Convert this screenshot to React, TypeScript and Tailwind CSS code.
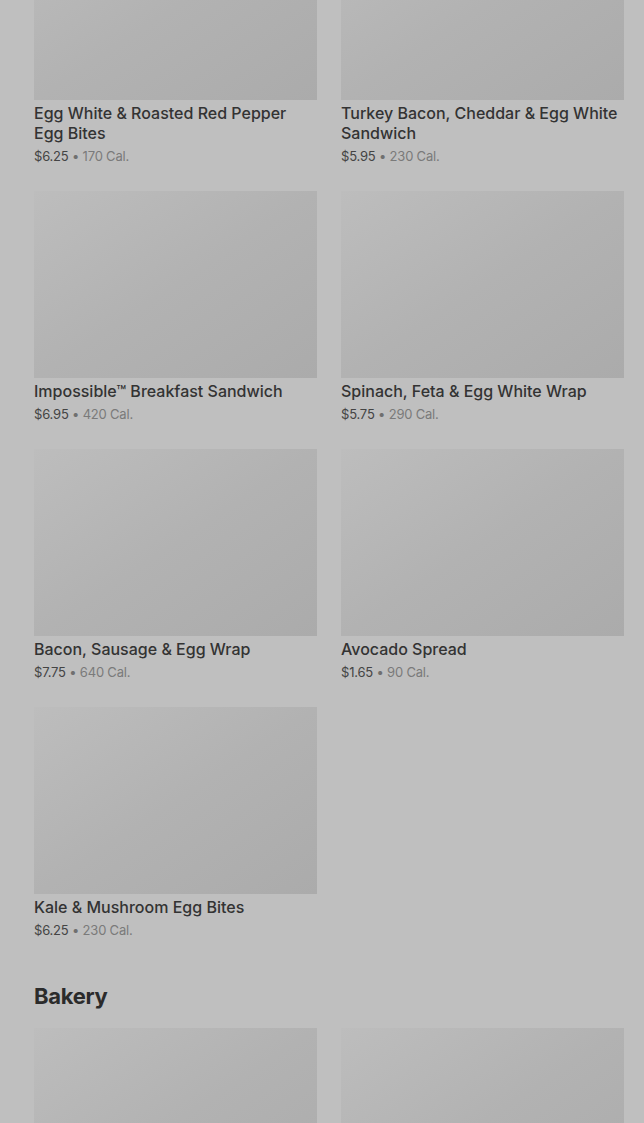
const breakfast = [
  { name: "Egg White & Roasted Red Pepper Egg Bites", price: "$6.25", cal: "170 Cal." },
  { name: "Turkey Bacon, Cheddar & Egg White Sandwich", price: "$5.95", cal: "230 Cal." },
  { name: "Impossible™ Breakfast Sandwich", price: "$6.95", cal: "420 Cal." },
  { name: "Spinach, Feta & Egg White Wrap", price: "$5.75", cal: "290 Cal." },
  { name: "Bacon, Sausage & Egg Wrap", price: "$7.75", cal: "640 Cal." },
  { name: "Avocado Spread", price: "$1.65", cal: "90 Cal." },
  { name: "Kale & Mushroom Egg Bites", price: "$6.25", cal: "230 Cal." },
];

const ItemCard = ({ name, price, cal }: { name: string; price: string; cal: string }) => (
  <div className="flex flex-col">
    <div className="h-[187px] w-full bg-gradient-to-br from-[#bdbdbd] via-[#b2b2b2] to-[#ababab]" />
    <div className="pt-[3px]">
      <div className="text-[16px] leading-[20px] font-medium text-[#333333]">{name}</div>
      <div className="mt-[3px] h-[20px] text-[13px] leading-[20px] tracking-[-0.2px] text-[#444444]">
        {price} <span className="text-[#6f6f6f]">•</span>{" "}
        <span className="text-[#7a7a7a]">{cal}</span>
      </div>
    </div>
  </div>
);

export default function App() {
  return (
    <div
      className="h-[1123px] overflow-hidden bg-[#bfbfbf] pl-[34px] pr-[20px]"
      style={{ fontFamily: "Inter, 'Noto Sans', Roboto, sans-serif" }}
    >
      <div className="-mt-[87px] grid grid-cols-2 gap-x-6 gap-y-[25px]">
        {breakfast.map((item) => (
          <ItemCard key={item.name} {...item} />
        ))}
      </div>
      <h2 className="pt-[42px] mb-[18px] text-[22px] leading-[28px] font-bold tracking-[-0.3px] text-[#2b2b2b]">
        Bakery
      </h2>
      <div className="grid grid-cols-2 gap-x-6">
        <div className="h-[187px] bg-gradient-to-br from-[#bdbdbd] via-[#b2b2b2] to-[#ababab]" />
        <div className="h-[187px] bg-gradient-to-br from-[#bdbdbd] via-[#b2b2b2] to-[#ababab]" />
      </div>
    </div>
  );
}
